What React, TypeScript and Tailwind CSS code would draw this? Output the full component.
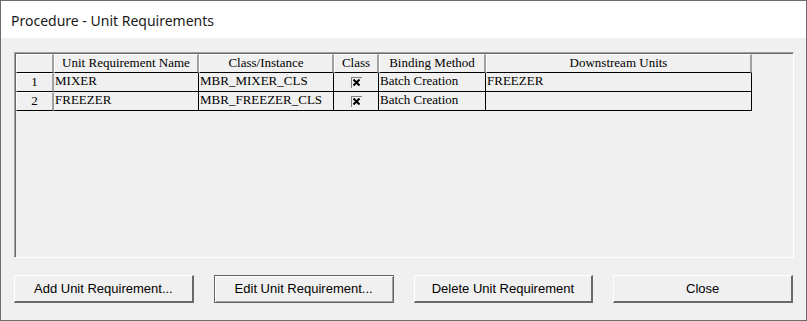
import React from 'react';

interface Row {
  id: number;
  name: string;
  cls: string;
  checked: boolean;
  binding: string;
  downstream: string;
}

const rows: Row[] = [
  { id: 1, name: 'MIXER', cls: 'MBR_MIXER_CLS', checked: true, binding: 'Batch Creation', downstream: 'FREEZER' },
  { id: 2, name: 'FREEZER', cls: 'MBR_FREEZER_CLS', checked: true, binding: 'Batch Creation', downstream: '' },
];

const columns = [
  { label: 'Unit Requirement Name', w: 'w-[145px]' },
  { label: 'Class/Instance', w: 'w-[135px]' },
  { label: 'Class', w: 'w-[45px]' },
  { label: 'Binding Method', w: 'w-[107px]' },
  { label: 'Downstream Units', w: 'w-[266px]' },
];

const CheckBox = () => (
  <span className="inline-flex h-[11px] w-[11px] items-center justify-center border-t border-l border-[#808080] bg-[#f0f0f0]">
    <svg width="7" height="7" viewBox="0 0 7 7">
      <path d="M0.5 0.5 L6.5 6.5 M6.5 0.5 L0.5 6.5" stroke="#000" strokeWidth="2" />
    </svg>
  </span>
);

const Button: React.FC<{ label: string; focused?: boolean }> = ({ label, focused = false }) => (
  <button
    className={
      'h-[28px] w-[180px] bg-[#f0f0f0] text-[13px] text-black ' +
      (focused
        ? 'border border-[#646464] shadow-[inset_1px_1px_0_#fff,inset_-1px_-1px_0_#a0a0a0]'
        : 'border-t border-l border-t-white border-l-white border-r-2 border-b-2 border-r-[#696969] border-b-[#696969]')
    }
  >
    {label}
  </button>
);

export default function App() {
  const cell = 'h-[19px] border-r border-b border-black px-[1px] truncate leading-[15px]';
  const head = 'h-[19px] border-t border-l border-white border-r-2 border-b border-r-[#a0a0a0] border-b-black text-center leading-[15px]';
  return (
    <div
      className="flex h-[321px] w-[807px] flex-col border border-[#6b6b6b] bg-[#f0f0f0]"
      style={{ fontFamily: '"Liberation Sans", Arial, sans-serif' }}
    >
      <div
        className="flex h-[37px] items-center bg-white pt-[1px] pl-[10px] text-[14px] text-[#1a1a1a]"
        style={{ fontFamily: '"Noto Sans", "Open Sans", sans-serif' }}
      >
        Procedure - Unit Requirements
      </div>

      <div className="flex flex-1 flex-col px-[13px] pt-[14px]">
        {/* grid */}
        <div className="h-[206px] w-[780px] border-t border-l border-[#a0a0a0] border-r border-b border-r-white border-b-white">
          <div
            className="h-full w-full border-t border-l border-[#696969] text-[13px] text-black"
            style={{ fontFamily: '"Liberation Serif", "Times New Roman", serif' }}
          >
            <div className="flex">
              <div className={`${head} w-[38px]`} />
              {columns.map((c) => (
                <div key={c.label} className={`${head} ${c.w}`}>
                  {c.label}
                </div>
              ))}
            </div>
            {rows.map((r) => (
              <div key={r.id} className="flex">
                <div className={`${head} w-[38px]`}>{r.id}</div>
                <div className={`${cell} w-[145px]`}>{r.name}</div>
                <div className={`${cell} w-[135px]`}>{r.cls}</div>
                <div className={`${cell} flex w-[45px] items-center justify-center`}>
                  {r.checked && <CheckBox />}
                </div>
                <div className={`${cell} w-[107px]`}>{r.binding}</div>
                <div className={`${cell} w-[266px]`}>{r.downstream}</div>
              </div>
            ))}
          </div>
        </div>

        <div className="mt-[17px] flex gap-[20px]">
          <Button label="Add Unit Requirement..." />
          <Button label="Edit Unit Requirement..." focused />
          <Button label="Delete Unit Requirement" />
          <Button label="Close" />
        </div>
      </div>
    </div>
  );
}
